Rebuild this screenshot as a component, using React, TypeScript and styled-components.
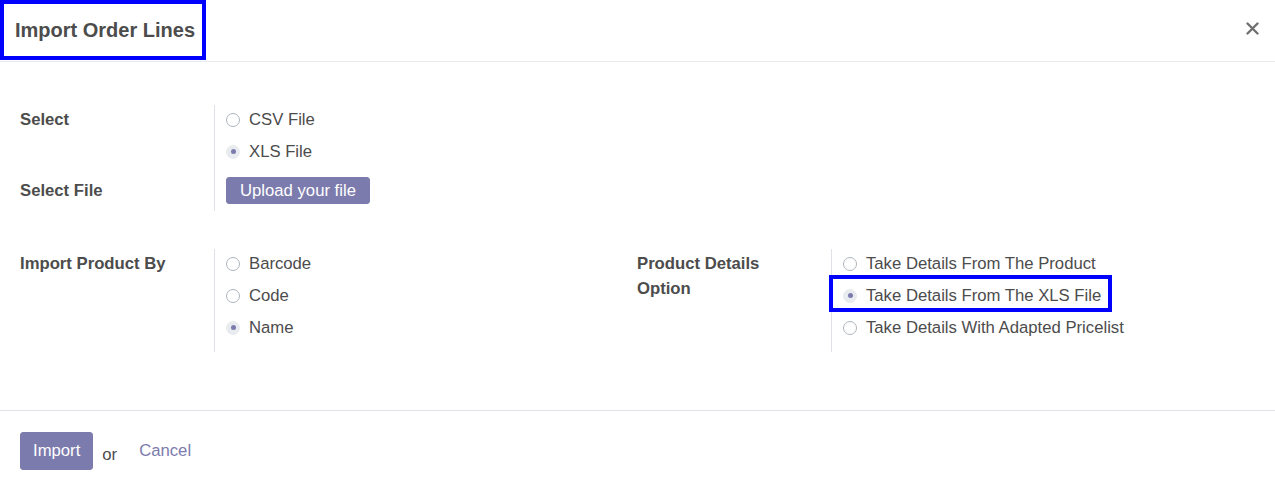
import React from "react";
import styled, { createGlobalStyle } from "styled-components";

const GlobalStyle = createGlobalStyle`
  html, body {
    margin: 0;
    padding: 0;
    background: #ffffff;
  }
  body {
    font-family: "Liberation Sans", Arial, Helvetica, sans-serif;
    font-size: 16.7px;
    color: #4c4c4c;
  }
  * {
    box-sizing: border-box;
  }
`;

const primary = "#7c7bad";

const StyledDialog = styled.div`
  width: 1275px;
  height: 499px;
  display: flex;
  flex-direction: column;
  background: #fff;
`;

const Header = styled.header`
  height: 62px;
  display: flex;
  justify-content: space-between;
  align-items: flex-start;
  border-bottom: 1px solid #e9ecef;
  padding-right: 16px;
`;

const Title = styled.h4`
  margin: 0;
  height: 60px;
  width: 206px;
  display: flex;
  align-items: center;
  padding: 0 0 0 11px;
  border: 4px solid #0000ff;
  font-size: 20px;
  font-weight: bold;
  color: #4c4c4c;
  white-space: nowrap;
`;

const CloseButton = styled.button`
  margin-top: 22px;
  padding: 0;
  border: 0;
  background: transparent;
  width: 13px;
  height: 13px;
  display: flex;
  cursor: pointer;
`;

const Body = styled.main`
  flex: 1;
  padding: 43px 20px 0;
  border-bottom: 1px solid #dee2e6;
`;

const Columns = styled.div<{ $spaced?: boolean }>`
  display: grid;
  grid-template-columns: 617px 1fr;
  margin-top: ${(p) => (p.$spaced ? "38px" : "0")};
`;

const Group = styled.div`
  display: flex;
  flex-direction: column;
`;

const Row = styled.div<{ $center?: boolean }>`
  display: grid;
  grid-template-columns: 194px 1fr;
  align-items: ${(p) => (p.$center ? "center" : "start")};
`;

const Label = styled.label<{ $offset?: number }>`
  font-weight: bold;
  line-height: 25px;
  padding: ${(p) => p.$offset ?? 1.5}px 30px 0 0;
`;

const Field = styled.div<{ $pad?: string }>`
  border-left: 1px solid #dee2e6;
  padding: ${(p) => p.$pad || "0 0 0 11px"};
  align-self: stretch;
  display: flex;
  flex-direction: column;
  align-items: flex-start;
  gap: 4px;
`;

const RadioItem = styled.div`
  position: relative;
  height: 28px;
  padding-top: 1px;
  display: inline-flex;
  align-items: center;
  gap: 9px;
  white-space: nowrap;
`;

const Circle = styled.span<{ $checked?: boolean }>`
  width: 14px;
  height: 14px;
  border-radius: 50%;
  flex: none;
  display: flex;
  align-items: center;
  justify-content: center;
  background: ${(p) => (p.$checked ? "#e9ecef" : "#fff")};
  border: 1px solid ${(p) => (p.$checked ? "#e9ecef" : "#adb5bd")};

  &::after {
    content: "";
    display: ${(p) => (p.$checked ? "block" : "none")};
    width: 5px;
    height: 5px;
    border-radius: 50%;
    background: ${primary};
  }
`;

const Highlight = styled.div`
  position: relative;

  &::after {
    content: "";
    position: absolute;
    top: -6px;
    bottom: -3px;
    left: -14px;
    right: -11px;
    border: 4px solid #0000ff;
    pointer-events: none;
  }
`;

const PrimaryButton = styled.button<{ $size?: "sm" | "md" }>`
  font-family: inherit;
  font-size: 16.7px;
  color: #fff;
  background: ${primary};
  border: 1px solid ${primary};
  border-radius: 3px;
  height: ${(p) => (p.$size === "sm" ? "27px" : "38px")};
  padding: 0 ${(p) => (p.$size === "sm" ? "13px" : "12px")};
  cursor: pointer;
`;

const Footer = styled.footer`
  height: 88px;
  display: flex;
  align-items: flex-start;
  padding: 21px 20px 0;
`;

const Actions = styled.div`
  display: flex;
  align-items: center;
  height: 38px;
`;

const OrText = styled.span`
  margin: 0 10px 0 9px;
  padding-top: 8px;
`;

const LinkButton = styled.button`
  font-family: inherit;
  font-size: 16.7px;
  color: ${primary};
  background: transparent;
  border: 0;
  padding: 0 12px;
  cursor: pointer;
`;

type Option = { label: string; checked?: boolean; highlight?: boolean };

const Radio = ({ label, checked }: Option) => (
  <RadioItem>
    <Circle $checked={checked} />
    {label}
  </RadioItem>
);

const RadioList = ({ options }: { options: Option[] }) => (
  <>
    {options.map((o) =>
      o.highlight ? (
        <Highlight key={o.label}>
          <Radio {...o} />
        </Highlight>
      ) : (
        <Radio key={o.label} {...o} />
      )
    )}
  </>
);

const fileTypes: Option[] = [{ label: "CSV File" }, { label: "XLS File", checked: true }];

const productBy: Option[] = [
  { label: "Barcode" },
  { label: "Code" },
  { label: "Name", checked: true },
];

const detailOptions: Option[] = [
  { label: "Take Details From The Product" },
  { label: "Take Details From The XLS File", checked: true, highlight: true },
  { label: "Take Details With Adapted Pricelist" },
];

const App = () => {
  return (
    <StyledDialog>
      <GlobalStyle />
      <Header>
        <Title>Import Order Lines</Title>
        <CloseButton aria-label="Close">
          <svg width="13" height="13" viewBox="0 0 13 13">
            <path
              d="M1.5 1.5 L11.5 11.5 M11.5 1.5 L1.5 11.5"
              stroke="#707070"
              strokeWidth="2.4"
              strokeLinecap="round"
            />
          </svg>
        </CloseButton>
      </Header>

      <Body>
        <Columns>
          <Group>
            <Row>
              <Label>Select</Label>
              <Field>
                <RadioList options={fileTypes} />
              </Field>
            </Row>
            <Row $center>
              <Label $offset={5}>Select File</Label>
              <Field $pad="12px 0 7px 11px">
                <PrimaryButton $size="sm">Upload your file</PrimaryButton>
              </Field>
            </Row>
          </Group>
          <div />
        </Columns>

        <Columns $spaced>
          <Group>
            <Row>
              <Label>Import Product By</Label>
              <Field $pad="0 0 11px 11px">
                <RadioList options={productBy} />
              </Field>
            </Row>
          </Group>
          <Group>
            <Row>
              <Label>Product Details Option</Label>
              <Field $pad="0 0 11px 11px">
                <RadioList options={detailOptions} />
              </Field>
            </Row>
          </Group>
        </Columns>
      </Body>

      <Footer>
        <Actions>
          <PrimaryButton>Import</PrimaryButton>
          <OrText>or</OrText>
          <LinkButton>Cancel</LinkButton>
        </Actions>
      </Footer>
    </StyledDialog>
  );
};

export default App;
